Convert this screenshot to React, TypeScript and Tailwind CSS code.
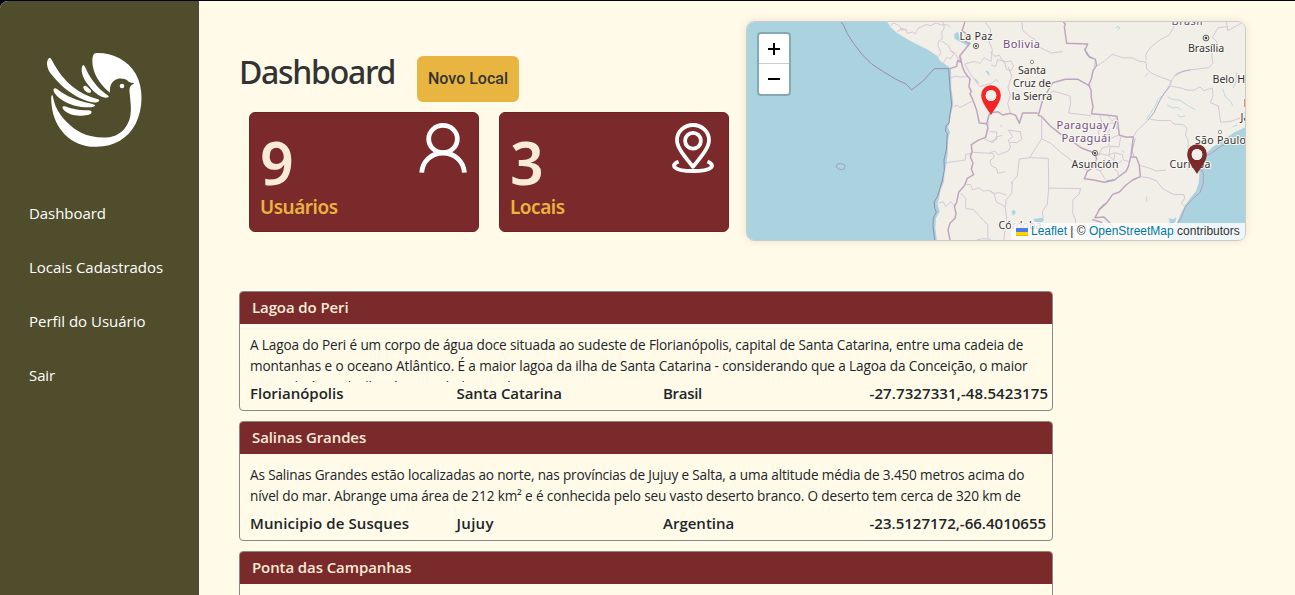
import type { ReactNode } from "react";

const menu = [
  { label: "Dashboard", cls: "tracking-[-0.05px]" },
  { label: "Locais Cadastrados", cls: "tracking-[-0.04px]" },
  { label: "Perfil do Usuário", cls: "tracking-[-0.02px]" },
  { label: "Sair", cls: "tracking-[-0.1px]" },
];

function Logo() {
  return (
    <svg className="block h-[96px] w-[98px]" viewBox="138 156 294 288" fill="#fff">
      <path d="M149 174C144 175 141 182 141 193C142 207 149 218 159 229C180 255 211 282 244 296C262 303 280 310 291 307C298 305 300 300 294 298C264 290 240 278 220 262C193 240 174 214 158 185C155 179 153 173 149 174Z" />
      <path d="M161 267C164 263 170 266 175 270C199 289 231 301 265 309C274 311 283 312 285 316C285 321 276 322 267 322C234 322 207 314 185 299C171 290 158 276 161 267Z" />
      <path d="M188 320C193 316 203 322 213 325C231 330 249 331 265 331C273 331 276 334 274 339C270 345 258 347 239 347C219 347 206 342 196 334C190 329 186 323 188 320Z" />
      <path d="M251 195C246 196 245 203 245 212C247 232 259 248 272 264C286 281 302 291 316 293C324 293 328 290 325 287C302 273 282 251 266 223C260 213 257 201 251 195Z" />
      <path d="M250 260C253 256 259 257 263 262L272 270C276 277 269 280 264 278C258 276 248 265 250 260Z" />
      <path d="M290 159C281 158 277 168 277 184C278 208 286 227 299 246C309 260 321 272 330 278C329 263 332 249 342 242C356 232 377 235 386 245C391 248 397 247 403 251C391 254 387 262 389 280C391 303 395 326 391 348C386 374 369 398 345 407C317 417 275 413 245 399C213 384 181 350 168 321C161 304 160 290 157 285C152 286 154 301 155 316C158 349 172 381 195 404C221 430 256 442 290 440C342 440 385 414 407 371C430 325 431 263 407 221C383 180 337 158 290 159Z" />
      <circle cx="366" cy="258" r="7" />
    </svg>
  );
}

function UserIcon() {
  return (
    <svg className="block h-[50px] w-[50px]" viewBox="0 0 50 50" fill="none" stroke="#fff" strokeWidth="4.8">
      <ellipse cx="25" cy="16" rx="14.3" ry="13.6" />
      <path d="M3.7 49.6C4.5 38 13.5 30 25 30S45.5 38 46.4 49.6" />
    </svg>
  );
}

function PlaceIcon() {
  return (
    <svg className="block h-[50px] w-[44px]" viewBox="0 0 44 50" fill="none" stroke="#fff" strokeWidth="3.8">
      <path d="M22 43.7C12 31.5 6 24 6 17.2C6 8.5 13.2 2 22 2S38 8.5 38 17.2C38 24 32 31.5 22 43.7Z" strokeLinejoin="round" />
      <circle cx="22" cy="17.7" r="7.9" />
      <path d="M7.5 38.5C-1 42 2 48 22 48S45 42 36.5 38.5" />
    </svg>
  );
}

function StatCard({ value, label, labelClass, children }: { value: string; label: string; labelClass: string; children: ReactNode }) {
  return (
    <div className="relative flex h-[120px] w-[230px] flex-col rounded-[6px] border border-[#6b2428] bg-[#7b2a2b] pl-[10px] pt-[20px]">
      <span className="h-[61px] font-['Noto_Sans',sans-serif] text-[59px] font-semibold leading-[58px] tracking-[-1px] text-[#faebd7]">{value}</span>
      <span className={"font-['Noto_Sans',sans-serif] text-[19px] font-semibold leading-[27px] text-[#e9b53f] " + labelClass}>{label}</span>
      {children}
    </div>
  );
}

function Pin({ x, y, color }: { x: number; y: number; color: string }) {
  return (
    <g transform={`translate(${x} ${y})`}>
      <path fill={color} fillRule="evenodd" d="M0 0C-5-8-9.8-13.2-9.8-20A9.8 9.8 0 0 1 9.8-20C9.8-13.2 5-8 0 0ZM0-25A5.3 5.5 0 1 0 0-14A5.3 5.5 0 1 0 0-25Z" />
      <ellipse cx="0" cy="-19.5" rx="5.3" ry="5.5" fill="#f2efe9" />
    </g>
  );
}

function MapDrawing() {
  return (
    <svg className="block h-full w-full" viewBox="747 22 498 218" fill="none" strokeLinejoin="round">
      <rect x="747" y="22" width="498" height="218" fill="#abd3df" />
      <g transform="translate(740 10) scale(.33333)">
        <path fill="#f2efe9" d="M438 30L452 52L470 68L490 80L510 92L535 105L565 120L592 138L600 152L628 172L633 176L634 235L640 280L634 310L628 340L624 352L630 366L625 385L623 430L620 460L614 485L612 515L602 540L596 570L592 580L599 605L588 625L586 655L592 700L1530 700L1530 0L438 0Z" />
      </g>
      <g transform="translate(990 10) scale(.33333)">
        <path fill="#abd3df" d="M780 344L755 357L735 366L713 380L696 391L684 401L668 411L652 426L637 440L626 460L628 490L626 520L618 543L602 563L586 584L573 610L558 645L544 700L780 700Z" />
        <path fill="#abd3df" d="M536 625l15 3 8-7-3 14-13 15-12-2 8-12ZM130 627l27-4 5 8-10 7-18-3ZM64 604l10-4 3 10-8 7Z" />
        <path stroke="#b1d5df" strokeWidth="2.5" d="M377 54l8-5 5 5-7 5M542 216l-16 33-22 20-10 22-26 38M532 260l15 8 23 3 18 12 27 16M532 286l18 8 13-2 11 9M562 313l8 8 16-3M698 236l8 24 16 15 6 12M740 187l-2 28-9 20M466 200l8-12M470 560v15M63 515l3 8M32 345l3 7M395 420l9 9M348 510l17 2M317 145l-4 25M728 350l14-5M736 370l17-9M590 595l-8 20" />
      </g>
      <g transform="translate(740 10) scale(.33333)">
        <path fill="#abd3df" d="M643 72l10-7 8 20 13 8 17 5-6 12-12-9-18-8-12-8ZM703 205l8 5 6 9-5-1-7-8ZM735 181l11 4 4 12-7-5Z" />
        <g stroke="#9c89a8" strokeWidth="3">
          <path d="M303 36L310 44L322 71L342 102L365 132L396 163L430 185L466 207L498 222L515 240L549 213L583 176L626 176L630 234L635 285L630 310L627 340L618 347L617 365L622 370L619 420L612 450L613 480L607 510L600 535L592 560L583 575L584 595L589 606L580 624L579 650L585 695" />
          <path strokeWidth="2" d="M291 463l10-3 13 5 1 10-10 5-12-4-4-7Z" />
        </g>
        <g stroke="#d3c2d3" strokeWidth="2.6">
          <path d="M450 49l10-10 13 5 8 7 2 10 13-3 5 12 17-4 8 6 9-18 24-11 11 4 19-8 13 6 19-1 10 8M471 66l15-11 17 6M608 36l5 16-8 16 2 18-12 8-1 15 9 17-7 14M605 93l21 14 5 15 11 9-10 15-13-3-9 18M655 148l-11-20-13-7M674 162l30-8 15 7 14-18 20 11 4-35-9-21 4-39-17-24-1-14M674 162l16 28 10 15 20 25 14-5 18-4 17-12 6 8" />
          <path d="M633 204l12-6 16 3 20-1 13 10M640 290l13-4 6 7 23-12 17-9M746 334l-8 40-5 12 16 8 10 4 10-17 18-5M696 427L759 430L763 441L750 452L754 468L770 475L773 490L795 485M620 458L661 452L676 450L677 433L694 431M678 523l13 1 8 16 18-7 13 10 18-1 14 8 16-2 20 7M595 580l14-5 8 15 15-15 15 16M662 549L677 565L677 596L700 598L718 618L743 644L744 686M710 690l17-4 26 2" />
        </g>
        <g stroke="#bda6bd" strokeWidth="4.4">
          <path d="M675 35L666 62L677 70L676 95L690 100L659 138L662 157L653 151L650 169L630 176M661 140L667 169L674 187L690 207L687 230L694 244L690 251L700 273L710 301L718 339L740 341L747 315L753 309M740 340L744 355L737 382L714 391L694 404L696 425L691 440L699 459L694 477L701 494L682 505L674 526L656 547L650 577L643 589L648 609L645 625L630 640L624 659L630 690" />
        </g>
      </g>
      <g transform="translate(990 10) scale(.33333)">
        <g stroke="#bda6bd" strokeWidth="4.4">
          <path d="M220 36L226 43L223 51L230 100L293 102L285 120L299 142L316 148L320 166L309 182L304 207L296 225L303 240L304 262L309 289L305 311L347 315L381 319L388 376L410 382L430 380L423 437L415 470L408 484L385 501L372 511L343 517L307 509L283 506L292 484L310 472L320 447L314 429L274 414L246 393L209 370L181 348L154 319L145 316L158 270L188 218L226 208L264 208L301 229M0 309L23 305L38 315L62 310L77 316L88 340L98 309L143 309M423 440L439 442L448 466L451 500L428 510L408 525L388 546L368 553L351 578L328 599L315 623L342 621L365 645L385 663M306 629l27 7 15 25" />
        </g>
        <path stroke="#b39eb9" strokeWidth="3" d="M751 383L725 396L694 408L665 429L644 440L630 470L640 490L640 520L630 548L604 570L586 591L573 625L564 640" />
        <g stroke="#d3c2d3" strokeWidth="2.7">
          <path d="M321 168L342 154L367 133L397 143L427 144L449 154L468 156L470 177L484 189L513 202L544 213L542 227L524 247L507 276L492 308L473 332L441 362L430 381M469 151L467 134L482 111L513 88L538 75L555 44L573 35M544 213L560 190L600 180L630 176L657 173L669 160L665 135L669 115L682 96L667 83L684 53L709 50L716 61L753 40M709 36l5 27M545 229L568 233L591 240L610 241L630 231L642 242L667 234L669 257L661 278L685 288L688 310L692 337L723 334L750 324L763 306M481 328L510 332L541 331L552 342L580 344L591 355L586 375L594 390L595 419L607 441L601 462L592 480M451 466L482 476L498 483L528 480M451 500L475 503L500 513L520 538L550 553L582 554L584 565L574 580L586 590" />
          <path d="M155 270L188 243L213 250L240 258L242 280L236 309L303 317M155 320L155 386L119 443M155 386L182 400L208 423L235 444L265 471L293 480M0 428L14 423L25 435L55 423L62 411L55 390L68 380L55 360L91 365L95 388L80 398L60 397M0 365L20 366L20 389L0 395M119 443L175 445L176 534L272 536M119 443L88 447L82 498L67 515L65 550L48 570L47 590M272 536L267 553L249 569L248 610L257 630L254 651M176 534L172 582L157 605L160 625M0 541L14 555L18 575L45 590L50 623L41 690" />
          <path d="M0 125l15 14 13-3 12 20 23-3 8 15-10 15-12-5-6-25-20-4-6 20-14-4M96 36l2 25 20 18 17 10 5 19 45 21 33-4M54 170l12 28-12 33 7 26-8 24 8 28M330 316l10 38 16-16 19 3 6 16M350 315l17 18 13-13M341 355l-16 9 5 31 18-12 12-28M383 376l-22 10-5 23-20 5-10 20M360 409l27 2 5-29M318 439l15-8 18 5 23-8 23 6 3 16 18 5M320 447l-3 30 13 5 16 27M330 482l13-8 2-30M360 409l-3 28 19 19M375 430l-7 43 16 14 1 14M376 466l20-14" />
        </g>
        <g stroke="#a3a2bf" strokeWidth="2">
          <path d="M283 115l8 20 20 10M542 227l-18 20-17 29-15 32-18 22M557 196l20-12 25-5M624 465v20M436 385l-10 38 6 16M350 514l22-7M324 600l20-20" />
        </g>
      </g>
      <g fontFamily="'Noto Sans',sans-serif" fontSize="10.6" textAnchor="middle" fill="#333" stroke="#f8f6f2" strokeWidth="2.2" paintOrder="stroke">
        <text x="976" y="40" textLength="33">La Paz</text>
        <text x="1032" y="74">Santa</text>
        <text x="1032" y="87">Cruz de</text>
        <text x="1032" y="100">la Sierra</text>
        <text x="1206" y="51.5">Brasília</text>
        <text x="1212.5" y="83" textAnchor="start">Belo H</text>
        <text x="1243.5" y="106.5" textAnchor="start">R</text>
        <text x="1240.5" y="120.5" textAnchor="start">Ja</text>
        <text x="1220.5" y="144" textLength="51">São Paulo</text>
        <text x="1095" y="168" textLength="47">Asunción</text>
        <text x="1190" y="167.5" textLength="41">Curitiba</text>
        <text x="1020" y="229" textLength="43">Córdoba</text>
        <g fill="#735080" fontSize="11">
          <text x="1021.5" y="48" textLength="37">Bolivia</text>
          <text x="1086.5" y="128.5" textLength="60">Paraguay /</text>
          <text x="1086" y="141.5" textLength="49">Paraguái</text>
          <text x="1187" y="24.5" textLength="31">Brasil</text>
        </g>
      </g>
      <g stroke="#555" strokeWidth="0.9">
        <circle cx="976" cy="46" r="2.6" />
        <circle cx="1206" cy="38" r="2.9" />
        <circle cx="1095" cy="153" r="2.6" />
      </g>
      <g fill="#444">
        <circle cx="976" cy="46" r="1.1" />
        <circle cx="1206" cy="38" r="1.3" />
        <circle cx="1095" cy="153" r="1.1" />
      </g>
      <g stroke="#777" strokeWidth="0.8" fill="#fff">
        <circle cx="1032" cy="62" r="1.7" />
        <circle cx="1220" cy="132" r="1.7" />
      </g>
      <Pin x={991} y={115} color="#f52525" />
      <Pin x={1197} y={174} color="#7b2a2b" />
    </svg>
  );
}

function MapPanel() {
  return (
    <div className="relative mt-[20px] h-[220px] w-[500px] shrink-0 overflow-hidden rounded-[8px] border border-[#ccc] shadow-[0_0_10px_rgba(0,0,0,0.1)]">
      <MapDrawing />
      <div className="absolute left-[10px] top-[10px] flex h-[64px] w-[34px] flex-col overflow-hidden rounded-[4px] border-2 border-[#86a8b2] bg-white">
        <div className="flex h-[30px] items-center justify-center border-b border-[#ccc]">
          <svg className="h-[12px] w-[12px]" viewBox="0 0 12 12" stroke="#000" strokeWidth="2"><path d="M0 6H12M6 0V12" /></svg>
        </div>
        <div className="flex h-[30px] items-center justify-center">
          <svg className="h-[12px] w-[12px]" viewBox="0 0 12 12" stroke="#000" strokeWidth="2"><path d="M0 6H12" /></svg>
        </div>
      </div>
      <div className="absolute bottom-0 right-0 flex h-[17px] w-[234px] items-center whitespace-pre bg-white/80 pl-[5px] font-['Liberation_Sans',Arial,sans-serif] text-[12px] leading-[17px] text-[#333]">
        <svg className="mr-[3px] h-[8px] w-[12px]" viewBox="0 0 12 8"><path fill="#4C7BE1" d="M0 0h12v4H0z" /><path fill="#FFD500" d="M0 4h12v3H0z" /><path fill="#E0BC00" d="M0 7h12v1H0z" /></svg>
        <span className="text-[#0078a8]">Leaflet</span>
        <span> | © </span>
        <span className="text-[#0078a8]">OpenStreetMap</span>
        <span> contributors</span>
      </div>
    </div>
  );
}

type Line = { text: string; cls: string };

function Place({ title, lines, cells }: { title: Line; lines: Line[]; cells: Line[] }) {
  return (
    <article className="h-[120px] w-[814px] shrink-0 overflow-hidden rounded-[4px] border border-[#888]">
      <h2 className={"h-[32px] whitespace-nowrap bg-[#7b2a2b] pl-[12px] text-[15px] font-semibold leading-[31px] text-[#faebd7] " + title.cls}>{title.text}</h2>
      <div className="mb-px ml-[10px] mt-[10px] h-[48px] overflow-hidden text-[13.6px] leading-[21px] text-[#212529]">
        {lines.map((l) => (
          <p key={l.text} className={"w-max whitespace-nowrap " + l.cls}>{l.text}</p>
        ))}
      </div>
      <div className="ml-[10px] grid grid-cols-[206.5px_206.5px_206.5px_190px] whitespace-nowrap text-[15px] font-semibold leading-[21px] text-[#212529]">
        {cells.map((c) => (
          <span key={c.text} className={c.cls}>{c.text}</span>
        ))}
      </div>
    </article>
  );
}

export default function App() {
  return (
    <div className="h-[595px] overflow-hidden bg-[#040418] pt-px font-['Open_Sans','Noto_Sans',sans-serif]">
      <div className="flex h-[594px] overflow-hidden rounded-tl-[8px] bg-[#fffbe8]">
        <aside className="flex w-[199px] shrink-0 flex-col bg-[#504d2c]">
          <div className="pl-[46px] pt-[51px]"><Logo /></div>
          <nav className="mt-[53px] flex flex-col gap-[30px] pl-[29px] text-[15px] leading-[24px] text-white">
            {menu.map((m) => (
              <a key={m.label} className={"w-max whitespace-nowrap " + m.cls}>{m.label}</a>
            ))}
          </nav>
        </aside>
        <main className="flex flex-1 flex-col pl-[40px]">
          <div className="flex">
            <div className="w-[507px] shrink-0">
              <div className="flex h-[111px] items-start">
                <h1 className="mt-[50px] w-[178px] whitespace-nowrap font-['Noto_Sans',sans-serif] text-[32px] font-medium leading-[42px] tracking-[-1.3px] text-[#333]">Dashboard</h1>
                <button className="mt-[55px] h-[46px] w-[102px] rounded-[6px] bg-[#e9b541] font-[Roboto,sans-serif] text-[16px] font-medium text-[#333]">Novo Local</button>
              </div>
              <div className="flex gap-[20px] pl-[10px]">
                <StatCard value="9" label="Usuários" labelClass="tracking-[-0.5px]">
                  <div className="absolute right-[10px] top-[10px]"><UserIcon /></div>
                </StatCard>
                <StatCard value="3" label="Locais" labelClass="tracking-[-0.5px]">
                  <div className="absolute right-[13px] top-[10px]"><PlaceIcon /></div>
                </StatCard>
              </div>
            </div>
            <MapPanel />
          </div>
          <section className="mt-[50px] flex flex-col gap-[10px]">
            <Place
              title={{ text: "Lagoa do Peri", cls: "tracking-[-0.1px]" }}
              lines={[
                { text: "A Lagoa do Peri é um corpo de água doce situada ao sudeste de Florianópolis, capital de Santa Catarina, entre uma cadeia de", cls: "tracking-[-0.142px]" },
                { text: "montanhas e o oceano Atlântico. É a maior lagoa da ilha de Santa Catarina - considerando que a Lagoa da Conceição, o maior", cls: "tracking-[-0.12px]" },
                { text: "corpo de água da ilha, é na verdade uma laguna.", cls: "tracking-[-0.1px]" },
              ]}
              cells={[
                { text: "Florianópolis", cls: "tracking-[0px]" },
                { text: "Santa Catarina", cls: "tracking-[-0.1px]" },
                { text: "Brasil", cls: "tracking-[-0.3px]" },
                { text: "-27.7327331,-48.5423175", cls: "tracking-[0.1px]" },
              ]}
            />
            <Place
              title={{ text: "Salinas Grandes", cls: "tracking-[-0.1px]" }}
              lines={[
                { text: "As Salinas Grandes estão localizadas ao norte, nas províncias de Jujuy e Salta, a uma altitude média de 3.450 metros acima do", cls: "tracking-[-0.158px]" },
                { text: "nível do mar. Abrange uma área de 212 km² e é conhecida pelo seu vasto deserto branco. O deserto tem cerca de 320 km de", cls: "tracking-[-0.142px]" },
                { text: "extensão", cls: "tracking-[-0.1px]" },
              ]}
              cells={[
                { text: "Municipio de Susques", cls: "tracking-[0.1px]" },
                { text: "Jujuy", cls: "tracking-[0.3px]" },
                { text: "Argentina", cls: "tracking-[0px]" },
                { text: "-23.5127172,-66.4010655", cls: "tracking-[0.01px]" },
              ]}
            />
            <Place title={{ text: "Ponta das Campanhas", cls: "tracking-[-0.1px]" }} lines={[]} cells={[]} />
          </section>
        </main>
      </div>
    </div>
  );
}
